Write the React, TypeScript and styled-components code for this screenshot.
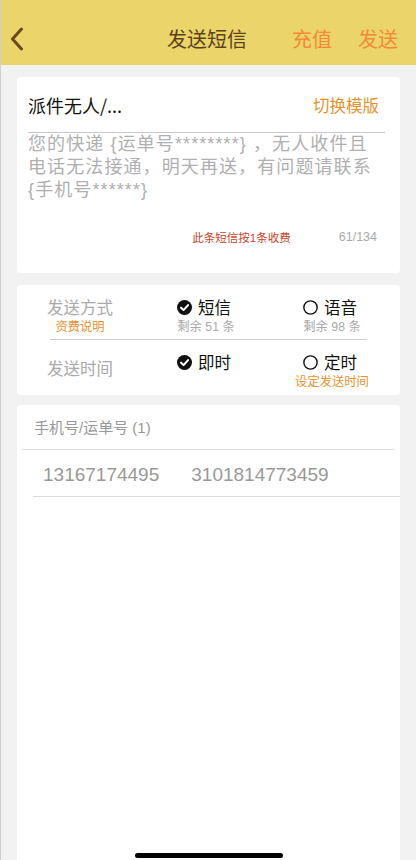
import React from "react";
import styled, { createGlobalStyle } from "styled-components";

const GlobalStyle = createGlobalStyle`
  html, body {
    margin: 0;
    padding: 0;
    background: #f2f2f2;
  }
  body {
    font-family: "Liberation Sans", "Noto Sans CJK SC", sans-serif;
  }
`;

const CheckOn = () => (
  <svg width="15" height="15" viewBox="0 0 16 16">
    <circle cx="8" cy="8" r="8" fill="#111" />
    <path
      d="M4.3 8.2 L7 10.8 L11.8 5.4"
      fill="none"
      stroke="#fff"
      strokeWidth="2.2"
      strokeLinecap="round"
      strokeLinejoin="round"
    />
  </svg>
);

const CheckOff = () => (
  <svg width="15" height="15" viewBox="0 0 16 16">
    <circle cx="8" cy="8" r="7.1" fill="none" stroke="#111" strokeWidth="1.5" />
  </svg>
);

const Back = () => (
  <svg width="14" height="24" viewBox="0 0 14 24">
    <path
      d="M11.5 2 L2.5 12 L11.5 22"
      fill="none"
      stroke="#6b4a1c"
      strokeWidth="3"
      strokeLinecap="round"
      strokeLinejoin="round"
    />
  </svg>
);

type Option = { on: boolean; label: string; sub?: string };

const rows: { label: string; note?: string; options: Option[] }[] = [
  {
    label: "发送方式",
    note: "资费说明",
    options: [
      { on: true, label: "短信", sub: "剩余 51 条" },
      { on: false, label: "语音", sub: "剩余 98 条" },
    ],
  },
  {
    label: "发送时间",
    options: [
      { on: true, label: "即时" },
      { on: false, label: "定时", sub: "设定发送时间" },
    ],
  },
];

export default function App() {
  return (
    <Page>
      <GlobalStyle />
      <Header>
        <BackBtn>
          <Back />
        </BackBtn>
        <Title>发送短信</Title>
        <Actions>
          <Action>充值</Action>
          <Action>发送</Action>
        </Actions>
      </Header>

      <Content>
        <Card $height="196px">
          <TemplateRow>
            <TemplateName>派件无人/...</TemplateName>
            <Switch>切换模版</Switch>
          </TemplateRow>
          <Body>
            您的快递 {"{"}运单号********{"}"} ，无人收件且
            <br />
            电话无法接通，明天再送，有问题请联系
            <br />
            {"{"}手机号******{"}"}
          </Body>
          <Footer>
            <Fee>此条短信按1条收费</Fee>
            <Count>61/134</Count>
          </Footer>
        </Card>

        <Card $height="110px" $gap="10px">
          <Options>
            {rows.map((row, i) => (
              <React.Fragment key={row.label}>
                {i > 0 && <Divider />}
                <OptionRow $first={i === 0}>
                  <Cell $offset={i === 0 ? "0px" : "6px"}>
                    <Label>{row.label}</Label>
                    {row.note && <Sub $tone="orange">{row.note}</Sub>}
                  </Cell>
                  {row.options.map((opt) => (
                    <Cell key={opt.label}>
                      <Choice>
                        {opt.on ? <CheckOn /> : <CheckOff />}
                        <span>{opt.label}</span>
                      </Choice>
                      {opt.sub && (
                        <Sub $tone={opt.sub.startsWith("剩余") ? "gray" : "orange"}>
                          {opt.sub}
                        </Sub>
                      )}
                    </Cell>
                  ))}
                </OptionRow>
              </React.Fragment>
            ))}
          </Options>
        </Card>

        <ListCard>
          <ListHead>手机号/运单号 (1)</ListHead>
          <NumberRow>
            <span>13167174495</span>
            <span>3101814773459</span>
          </NumberRow>
        </ListCard>
      </Content>
      <HomeBar />
    </Page>
  );
}

const Page = styled.div`
  position: relative;
  min-height: 860px;
  display: flex;
  flex-direction: column;
  background: #f2f2f2;
  border-left: 1px solid #cfcfcf;
  box-sizing: border-box;
`;

const Header = styled.div`
  height: 65px;
  background: #ebd46a;
  display: flex;
  align-items: flex-end;
  padding: 0 18px 12px 9px;
  box-sizing: border-box;
  position: relative;
`;

const BackBtn = styled.div`
  width: 14px;
  height: 24px;
  margin-bottom: 2px;
`;

const Title = styled.div`
  flex: 1;
  padding-left: 143px;
  font-size: 20px;
  line-height: 28px;
  color: #5c4219;
  font-family: "Noto Sans CJK SC", sans-serif;
`;

const Actions = styled.div`
  display: flex;
  gap: 26px;
`;

const Action = styled.div`
  font-size: 20px;
  line-height: 28px;
  color: #f28a3a;
  font-family: "Noto Sans CJK SC", sans-serif;
`;

const Content = styled.div`
  flex: 1;
  display: flex;
  flex-direction: column;
  padding: 12px 16px 0 16px;
`;

const Card = styled.div<{ $height: string; $gap?: string }>`
  height: ${(p) => p.$height};
  margin-bottom: ${(p) => p.$gap ?? "12px"};
  background: #fff;
  border-radius: 4px;
  box-sizing: border-box;
  display: flex;
  flex-direction: column;
`;

const TemplateRow = styled.div`
  display: flex;
  justify-content: space-between;
  align-items: center;
  margin: 0 15px 0 11px;
  padding: 15px 6px 14px 0;
  border-bottom: 1px solid #c8c8c8;
`;

const TemplateName = styled.div`
  font-size: 18px;
  line-height: 26px;
  color: #111;
  font-family: "Noto Sans CJK SC", sans-serif;
`;

const Switch = styled.div`
  font-size: 16.5px;
  line-height: 26px;
  color: #e8922e;
  font-family: "Noto Sans CJK SC", sans-serif;
`;

const Body = styled.div`
  padding: 0 11px;
  font-size: 18px;
  line-height: 23px;
  color: #b0b0b0;
  letter-spacing: 1.1px;
  white-space: nowrap;
  font-family: "Liberation Sans", "Noto Sans CJK SC", sans-serif;
`;

const Footer = styled.div`
  margin-top: auto;
  display: flex;
  align-items: center;
  justify-content: flex-end;
  gap: 48px;
  padding: 0 23px 28px 0;
`;

const Fee = styled.div`
  font-size: 11.5px;
  color: #c8442a;
  font-family: "Liberation Sans", "Noto Sans CJK SC", sans-serif;
`;

const Count = styled.div`
  font-size: 12.5px;
  color: #aaa;
`;

const Options = styled.div`
  display: flex;
  flex-direction: column;
  padding-top: 11px;
`;

const OptionRow = styled.div<{ $first: boolean }>`
  display: grid;
  grid-template-columns: 126px 126px 126px;
  padding-bottom: ${(p) => (p.$first ? "4px" : "0")};
  padding-top: ${(p) => (p.$first ? "0" : "11px")};
`;

const Cell = styled.div<{ $offset?: string }>`
  display: flex;
  flex-direction: column;
  align-items: center;
  padding-top: ${(p) => p.$offset ?? "0px"};
`;

const Label = styled.div`
  font-size: 16.5px;
  line-height: 22px;
  color: #aaa;
  font-family: "Noto Sans CJK SC", sans-serif;
`;

const Choice = styled.div`
  display: flex;
  align-items: center;
  gap: 6px;
  margin-left: -4px;
  font-size: 16.5px;
  line-height: 22px;
  color: #111;
  font-family: "Noto Sans CJK SC", sans-serif;
`;

const Sub = styled.div<{ $tone: "orange" | "gray" }>`
  font-size: 12.3px;
  line-height: 16px;
  margin-top: 1px;
  color: ${(p) => (p.$tone === "orange" ? "#e8922e" : "#aaa")};
  font-family: "Liberation Sans", "Noto Sans CJK SC", sans-serif;
`;

const Divider = styled.div`
  height: 1px;
  background: #cfcfcf;
  margin: 0 33px;
`;

const ListCard = styled.div`
  flex: 1;
  background: #fff;
  border-radius: 4px 4px 0 0;
  display: flex;
  flex-direction: column;
`;

const ListHead = styled.div`
  margin: 0 6px 0 5px;
  padding: 12px 12px 10px;
  font-size: 15px;
  line-height: 22px;
  color: #999;
  border-bottom: 1px solid #e2e2e2;
  font-family: "Liberation Sans", "Noto Sans CJK SC", sans-serif;
`;

const NumberRow = styled.div`
  margin-left: 16px;
  padding: 14px 0 10px 10px;
  display: flex;
  gap: 32px;
  font-size: 19px;
  line-height: 22px;
  color: #999;
  border-bottom: 1px solid #dcdcdc;
`;

const HomeBar = styled.div`
  position: absolute;
  left: 134px;
  bottom: 2px;
  width: 148px;
  height: 5px;
  border-radius: 3px;
  background: #000;
`;
